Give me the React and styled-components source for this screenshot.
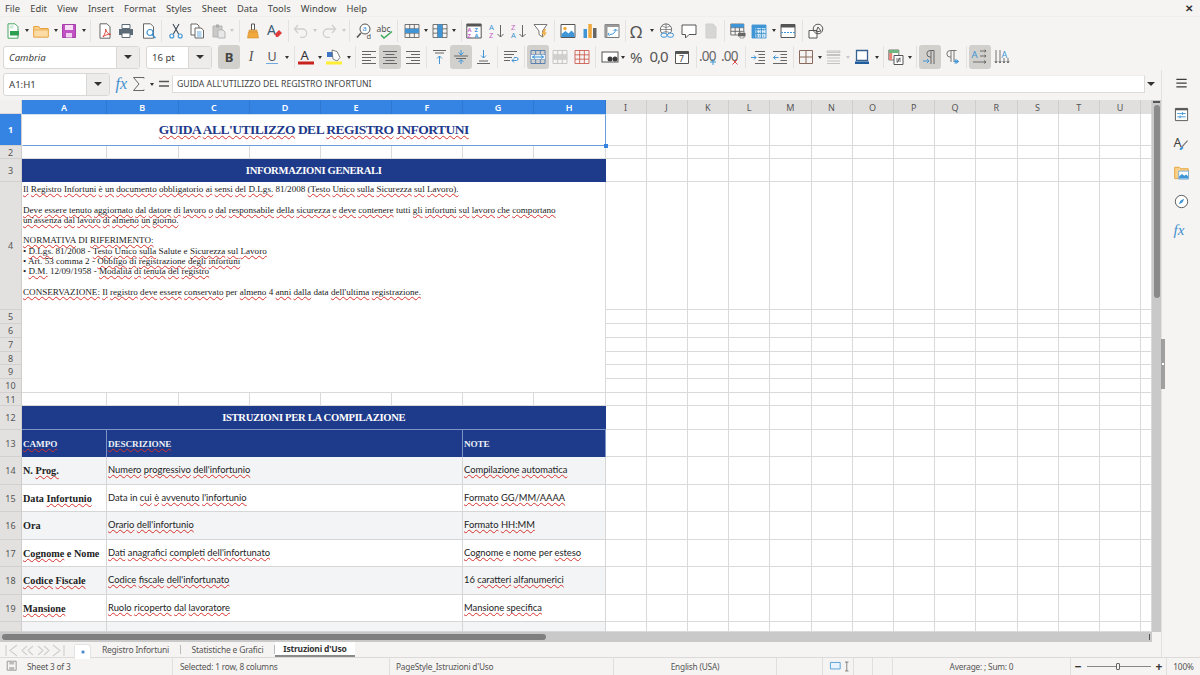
import React from "react";
import styled, { createGlobalStyle } from "styled-components";

const Global = createGlobalStyle`
  html, body { margin: 0; padding: 0; background: #f5f4f2; overflow: hidden; }
  * { box-sizing: border-box; }
`;

const UI = `"Noto Sans", "Open Sans", sans-serif`;
const SERIF = `"Liberation Serif", "DejaVu Serif", serif`;
const BODY = `Lato, "Noto Sans", sans-serif`;
const NAVY = "#1e3a8a";
const BLUE = "#3584e4";
const LINE = "#dadada";

const Page = styled.div`
  width: 1200px; height: 675px; display: flex; flex-direction: column;
  background: #f5f4f2; font-family: ${UI}; color: #3d3d3d; overflow: hidden;
`;
const MenuBar = styled.div`
  height: 17px; flex: none; display: flex; align-items: center; gap: 10.2px;
  padding-left: 5px; font-size: 9.4px; color: #444; border-bottom: 1px solid #efeeec; position: relative;
`;
const CloseDoc = styled.span`
  position: absolute; right: 7px; top: 1px; font-size: 10px; font-weight: 700; color: #333;
`;
const ToolRow = styled.div`
  height: ${p => p.$h}px; flex: none; display: flex; align-items: center;
  padding-left: ${p => p.$pad || 0}px;
`;
const Slot = styled.div`
  flex: none; display: flex; align-items: center; justify-content: center;
  height: ${p => (p.$pressed ? 24 : 16)}px; width: ${p => p.$w}px;
  background: ${p => (p.$pressed ? "#d1d0cd" : "transparent")}; border-radius: 3px;
  color: #4a4a4a; font-size: 12px;
`;
const Caret = styled.span`
  display: block; width: 0; height: 0;
  border-left: ${p => (p.$big ? 4 : 2.5)}px solid transparent;
  border-right: ${p => (p.$big ? 4 : 2.5)}px solid transparent;
  border-top: ${p => (p.$big ? 4 : 3)}px solid ${p => (p.$light ? "#c9c9c9" : "#333")};
`;
const Sep = styled.span`
  display: block; width: 1px; height: 22px; background: #e3e2e0;
`;
const Combo = styled.div`
  flex: none; width: ${p => p.$w}px; height: ${p => p.$h || 23}px; display: flex;
  margin-right: ${p => p.$mr || 0}px; background: #fff;
  border: 1px solid #d9d8d6; border-radius: 3px; overflow: hidden;
`;
const ComboText = styled.span`
  flex: 1; display: flex; align-items: center; padding-left: 5px; font-size: 9.6px; color: #3d3d3d;
  font-style: ${p => (p.$italic ? "italic" : "normal")};
`;
const ComboBtn = styled.span`
  flex: none; width: 23px; display: flex; align-items: center; justify-content: center;
  background: #edecea; border-left: 1px solid #d9d8d6;
`;
const Mid = styled.div`
  flex: 1; display: flex; min-height: 0; position: relative;
`;
const Left = styled.div`
  flex: none; width: 1161px; display: flex; flex-direction: column;
`;
const FormulaRow = styled.div`
  height: 30px; flex: none; display: flex; align-items: center; padding: 0 0 2px 3px;
`;
const Input = styled.div`
  flex: none; width: 973px; height: 18px; background: #fff;
  border: 1px solid #dcdbd9; border-top-color: #eee; font-size: 8.7px; color: #444;
  display: flex; align-items: center; padding-left: 4px;
`;
const InputCaret = styled.span`
  margin-left: 2px; display: block;
`;
const SheetRow = styled.div`
  flex: none; height: 532px; display: flex;
`;
const Grid = styled.div`
  flex: none; width: 1152px; height: 532px; display: grid; background: #fff; overflow: hidden;
  grid-template-columns: 22px 85px 71.5px 71.5px 71px 71px 71px 71px 71.5px 41px 41px 41.5px 41px 41.5px 41px 41px 41.5px 41px 41.5px 41px 41.5px 41px 11px;
  grid-template-rows: 14px 32px 13px 23px 128px 14px 14px 14px 13px 14px 14px 13px 24px 27px 28px 27px 28px 27px 28px 27px 10px;
`;
const Corner = styled.div`
  background: #f1f0ee; border-right: 1px solid #d8d7d5; border-bottom: 1px solid #d8d7d5;
`;
const ColHead = styled.div`
  display: flex; align-items: center; justify-content: center; font-size: 9px;
  font-weight: ${p => (p.$on ? 600 : 400)};
  color: ${p => (p.$on ? "#fff" : "#555")};
  background: ${p => (p.$on ? BLUE : "#e0dfdd")};
  border-right: 1px solid ${p => (p.$on ? "#2f78d2" : "#cfcecc")};
`;
const RowHead = styled.div`
  display: flex; align-items: center; justify-content: center; font-size: 9px;
  font-weight: ${p => (p.$on ? 700 : 400)};
  color: ${p => (p.$on ? "#fff" : "#555")};
  background: ${p => (p.$on ? BLUE : "#e2e1df")};
  border-bottom: 1px solid #d2d1cf; border-right: 1px solid #cfcecc;
`;
const Blank = styled.div`
  border-right: 1px solid ${LINE}; border-bottom: 1px solid ${LINE};
`;
const TitleCell = styled.div`
  grid-column: span 8; position: relative; display: flex; align-items: center; justify-content: center;
  border: 1.5px solid #6a9ed9; border-top-color: #cfe0f3; border-left-color: #fff;
  font-family: ${SERIF}; font-weight: 700; font-size: 13.5px; letter-spacing: -0.5px; color: ${NAVY}; background: #fff;
`;
const Handle = styled.span`
  position: absolute; right: -3px; bottom: -3px; width: 4px; height: 4px; background: #3584e4;
`;
const Band = styled.div`
  grid-column: span 8; display: flex; align-items: center; justify-content: center;
  background: ${NAVY}; color: #fff; font-family: ${SERIF}; font-weight: 700; font-size: 10.6px; letter-spacing: -0.3px;
  border-bottom: 1px solid ${p => (p.$line ? "#7f93c4" : NAVY)};
`;
const Notes = styled.div`
  grid-column: span 8; grid-row: span 7; padding: 2px 0 0 1px; font-family: ${SERIF};
  font-size: 9.1px; line-height: 10.3px; color: #1a1a1a; background: #fff;
  border-right: 1px solid ${LINE}; border-bottom: 1px solid ${LINE}; white-space: pre;
`;
const NoteLine = styled.div`
  height: 10.3px;
`;
const HeadCell = styled.div`
  grid-column: span ${p => p.$span}; display: flex; align-items: center; padding-left: 1px;
  background: ${NAVY}; color: #eef1f8; font-family: ${SERIF}; font-weight: 700; font-size: 9.2px; letter-spacing: -0.1px;
  border-right: 1px solid #7f93c4;
`;
const DataCell = styled.div`
  grid-column: span ${p => p.$span}; display: flex; padding-left: 1px;
  align-items: ${p => (p.$cut ? "flex-start" : "center")};
  padding-top: ${p => (p.$cut ? 6.5 : 0)}px;
  padding-bottom: ${p => (p.$label || p.$cut ? 0 : 2)}px;
  white-space: nowrap; overflow: hidden;
  background: ${p => (p.$alt ? "#f2f4f5" : "#fff")};
  border-right: 1px solid #d6d6d6; border-bottom: 1px solid #d6d6d6; color: #222;
  font-family: ${p => (p.$label ? SERIF : BODY)};
  font-weight: ${p => (p.$label ? 700 : 400)};
  font-size: ${p => (p.$label ? 10.2 : 9.35)}px;
`;
const Typo = styled.span`
  text-decoration: underline wavy #d6332e 0.5px; text-underline-offset: 0.5px; text-decoration-skip-ink: none;
`;
const VScroll = styled.div`
  flex: none; width: 9px; background: #c9c9c9; position: relative; padding: 5px 1.5px 0;
`;
const VThumb = styled.div`
  height: 193px; background: #8a8a8a; border-radius: 3px;
`;
const VTop = styled.div`
  position: absolute; left: 1px; right: 1px; top: 1px; height: 1.5px; background: #555;
`;
const HScroll = styled.div`
  flex: none; height: 10px; width: 1152px; background: #c9c9c9; padding: 1.5px 0 0 2px; position: relative;
`;
const HThumb = styled.div`
  width: 544px; height: 6px; background: #7f7f7f; border-radius: 3px;
`;
const HEnd = styled.span`
  position: absolute; right: 2px; top: 2px; width: 1px; height: 6px; background: #555;
`;
const TabBar = styled.div`
  flex: 1; display: flex; align-items: stretch; font-size: 8.5px; letter-spacing: -0.2px; color: #555; min-height: 0;
`;
const NavBlock = styled.div`
  flex: none; width: 74px; padding: 2px 0 0 5px;
`;
const NewTab = styled.div`
  flex: none; width: 17px; height: 15px; margin-top: 2px; background: #fff; border: 1px solid #e3e3e3;
  border-bottom: none; border-radius: 2px 4px 0 0; display: flex; align-items: center; justify-content: center;
`;
const Tab = styled.div`
  flex: none; width: ${p => p.$w}px; display: flex; align-items: center; justify-content: center;
  ${p => p.$on ? `background:#fff; color:#333; font-weight:700; border-bottom:2px solid #8a8a8a;` : ""}
`;
const TabSep = styled.span`
  flex: none; width: 1px; height: 9px; align-self: center; background: #bbb;
`;
const Side = styled.div`
  flex: none; width: 39px; border-left: 1px solid #e2e1df; display: flex; flex-direction: column;
  align-items: center; padding-top: 6px; gap: 14px;
`;
const SideTop = styled.div`
  margin-bottom: 2px;
`;
const SideGrip = styled.div`
  position: absolute; left: 1161px; top: 269px; width: 4px; height: 50px; background: #9f9f9f;
  display: flex; align-items: center; justify-content: center;
`;
const GripDot = styled.span`
  width: 2px; height: 2px; background: #fff;
`;
const Status = styled.div`
  flex: none; height: 18px; display: flex; align-items: center; font-size: 8.3px; letter-spacing: -0.2px; color: #555;
  border-top: 1px solid #dbdad8;
`;
const Seg = styled.div`
  flex: none; width: ${p => p.$w}px; height: 100%; display: flex; align-items: center;
  justify-content: ${p => p.$j || "center"}; padding-left: ${p => p.$pl || 0}px; gap: ${p => p.$gap || 0}px;
  border-right: ${p => (p.$nb ? "none" : "1px solid #e0dfdd")}; white-space: nowrap;
`;
const Track = styled.div`
  width: 64px; height: 1px; background: #888; position: relative;
`;
const Knob = styled.span`
  position: absolute; left: 29px; top: -3px; width: 4px; height: 7px; background: #f5f4f2; border: 1px solid #666; border-radius: 1px;
`;
const PM = styled.span`
  font-size: 12px; font-weight: 700; color: #333; line-height: 1;
`;

const G = ({ s = 16, children }) => (
  <svg width={s} height={s} viewBox="0 0 16 16" fill="none" style={{ display: "block", flex: "none", overflow: "visible" }}>{children}</svg>
);

const txt = { fontFamily: "Noto Sans, sans-serif" };
const gridLines = (x, y, w, h, c) => (
  <path d={`M${x} ${y}h${w}v${h}h${-w}zM${x} ${y + h / 3}h${w}M${x} ${y + 2 * h / 3}h${w}M${x + w / 3} ${y}v${h}M${x + 2 * w / 3} ${y}v${h}`} stroke={c} strokeWidth=".8" />
);

const icons = {
  new: <><path d="M3 .8h7l3 3v11.4H3z" fill="#fff" stroke="#4aa564" /><path d="M5 8h9v4.5H5z" fill="#2e9e4f" /><path d="M4.5 2.5h4v3h-4z" fill="#cfe9d5" /></>,
  open: <><path d="M.7 3.5h5l1.5 2h8v8.5H.7z" fill="#fbd08a" stroke="#e6a23c" /><path d="M.7 7h14.6v7H.7z" fill="#fcdca6" stroke="#e6a23c" strokeWidth=".7" /></>,
  save: <><path d="M1.5 1.5h13v13h-13z" fill="#c152c4" stroke="#a63fa9" /><path d="M4 2h8v5H4z" fill="#f6dff6" /><path d="M5 10h6v4.5H5z" fill="#efd1f0" /></>,
  pdf: <><path d="M3 .8h7l3 3v11.4H3z" fill="#fff" stroke="#666" /><path d="M6 14c2-3 3-6 2.6-8 .8 3 2.5 5 5 5.4-3-.3-6 .7-7.6 2.6z" stroke="#d8392f" strokeWidth=".9" /></>,
  print: <><path d="M4 1.5h8v4H4z" fill="#fff" stroke="#5b6b78" /><path d="M1 6h14v6H1z" fill="#5b6b78" /><path d="M4 10h8v4.5H4z" fill="#fff" stroke="#5b6b78" /></>,
  preview: <><path d="M2.5.8h7l3 3v11.4h-10z" fill="#fff" stroke="#666" /><circle cx="9" cy="9.5" r="3" fill="#fff" stroke="#3f95d6" strokeWidth="1.2" /><path d="M11 11.5l3.5 3.5" stroke="#3f95d6" strokeWidth="1.5" /></>,
  cut: <><path d="M5 1l5.6 10M11 1L5.4 11" stroke="#3d4b57" strokeWidth="1.1" /><circle cx="3.8" cy="13" r="2" stroke="#3f95d6" strokeWidth="1.1" /><circle cx="12.2" cy="13" r="2" stroke="#3f95d6" strokeWidth="1.1" /></>,
  copy: <><path d="M2 1h6l2 2v9H2z" fill="#fff" stroke="#666" /><path d="M6 5h6l2.5 2v8H6z" fill="#fff" stroke="#666" /><path d="M8 9h4.5M8 11h4.5M8 13h4.5" stroke="#3f95d6" strokeWidth=".8" /></>,
  paste: <><path d="M2 3h9v11H2z" fill="#c9c9c9" stroke="#b5b5b5" /><path d="M5 1.5h3v3H5z" fill="#aaa" /><path d="M7 7h5l2 2v6H7z" fill="#e8e8e8" stroke="#b5b5b5" /></>,
  clone: <><path d="M6.5 1h3v6h-3z" fill="#fff" stroke="#555" /><path d="M4 7h8v2H4z" fill="#f0b65c" stroke="#d48f2a" strokeWidth=".6" /><path d="M3.5 9h9l1 6h-11z" fill="#f1a93d" stroke="#d48f2a" strokeWidth=".6" /></>,
  clear: <><text x="0" y="12" fontSize="14" fill="#3c5d78" style={txt}>A</text><path d="M8 11l4-4 3 3-4 4H9z" fill="#e23b3b" /></>,
  undo: <path d="M5 2L1.5 6 5 10M2 6h7.5a4.2 4.2 0 010 8.4H7" stroke="#cfcfcf" strokeWidth="1.3" />,
  redo: <path d="M11 2l3.5 4L11 10M14 6H6.5a4.2 4.2 0 000 8.4H9" stroke="#cfcfcf" strokeWidth="1.3" />,
  find: <><circle cx="9" cy="6" r="5" stroke="#555" strokeWidth="1" fill="#fff" /><path d="M5 10l-4 4.5" stroke="#555" strokeWidth="1.6" /><text x="6.4" y="8.2" fontSize="7.5" fill="#3f95d6" style={txt}>a</text><text x="10.5" y="15.5" fontSize="7.5" fill="#555" style={txt}>d</text></>,
  spell: <><text x="-.5" y="8.5" fontSize="8.6" fill="#555" style={txt}>abc</text><path d="M4 12l3 3 8-6.5" stroke="#3fa85a" strokeWidth="1.5" /></>,
  tableRow: <>{gridLines(1, 1.5, 14, 13, "#555")}<path d="M1 5.8h14V10H1z" fill="#3f95d6" /></>,
  tableCol: <>{gridLines(1, 1.5, 14, 13, "#555")}<path d="M5.6 1.5H10.4v13H5.6z" fill="#3f95d6" /></>,
  sort: <><path d="M.8 1h14.4v14H.8z" fill="#fff" stroke="#555" /><path d="M1 1h14v2.5H1z" fill="#555" /><text x="1.6" y="9" fontSize="5.8" fontWeight="700" fill="#c666c8" style={txt}>A</text><text x="8.6" y="9" fontSize="5.8" fontWeight="700" fill="#3f95d6" style={txt}>Z</text><text x="1.6" y="14.6" fontSize="5.8" fontWeight="700" fill="#c666c8" style={txt}>Z</text><text x="8.6" y="14.6" fontSize="5.8" fontWeight="700" fill="#3f95d6" style={txt}>A</text></>,
  az: <><text x="0" y="7" fontSize="7.6" fill="#3f95d6" style={txt}>A</text><text x="0" y="15" fontSize="7.6" fill="#c666c8" style={txt}>Z</text><path d="M11.5 2v12M8.5 11l3 3 3-3" stroke="#666" strokeWidth="1" /></>,
  za: <><text x="0" y="7" fontSize="7.6" fill="#c666c8" style={txt}>Z</text><text x="0" y="15" fontSize="7.6" fill="#3f95d6" style={txt}>A</text><path d="M11.5 2v12M8.5 11l3 3 3-3" stroke="#666" strokeWidth="1" /></>,
  filter: <><path d="M1 1.5h13L9.5 8v6L6 11.5V8z" fill="#fff" stroke="#777" /><path d="M11 6L8.5 11h2.2l-1 4L14 9.5h-2.3L13 6z" fill="#f2b04a" /></>,
  image: <><path d="M1 1.5h14v13H1z" fill="#fff" stroke="#555" /><circle cx="5" cy="5.5" r="1.7" fill="#f0a93a" /><path d="M1.5 14V11l4-3 3 2.5 3-3 3 3V14z" fill="#3f95d6" /></>,
  chart: <><path d="M1.5 6h3.5v9H1.5z" fill="#3f95d6" /><path d="M6.3 1h3.5v14H6.3z" fill="#f0a93a" /><path d="M11 5h3.5v10H11z" fill="#666" /></>,
  pivot: <><path d="M1 1.5h14v13H1z" fill="#fff" stroke="#777" /><path d="M1 1.5h14V4H1zM1 1.5h2.5v13H1z" fill="#999" /><path d="M6 11.5c3 0 5.5-2 5.5-5M9.5 8l2-2 2 2M5 9.8l-1 1.7 2 1" stroke="#3f95d6" /></>,
  omega: <text x="0" y="14.5" fontSize="17" fill="#555" style={txt}>Ω</text>,
  link: <><circle cx="7" cy="6.5" r="5.6" fill="#fff" stroke="#666" /><path d="M1.5 6.5h11M7 1v11M3 2.8c2.5 2 5.5 2 8 0M3 10.2c2.5-2 5.5-2 8 0" stroke="#666" strokeWidth=".7" /><rect x="2" y="10.2" width="6" height="4" rx="2" stroke="#3f95d6" fill="#f5f4f2" /><rect x="8.5" y="10.2" width="6" height="4" rx="2" stroke="#3f95d6" fill="#f5f4f2" /></>,
  comment: <path d="M1 2h14v9.5H8L4.5 15v-3.5H1z" fill="#fff" stroke="#555" />,
  pageGray: <path d="M3 1h7l3 3v11H3z" fill="#d6d6d4" stroke="#cfcfcd" />,
  defPrint: <>{gridLines(.8, 1, 13, 11, "#555")}<path d="M1 1h13v3.5H1z" fill="#3f95d6" /><path d="M8 10h7.5v3.4H8z" fill="#666" /><path d="M10 8.5h4V10h-4zM10 13h4v2h-4z" fill="#fff" stroke="#666" strokeWidth=".6" /></>,
  freeze: <><path d="M1 2h14v13H1z" fill="#dcebf7" />{gridLines(1, 2, 14, 13, "#2d8ccc")}<path d="M1 2h14v3H1zM1 2h3.5v13H1z" fill="#3f95d6" /><path d="M6 7h8M6 10h8M6 13h8" stroke="#2d8ccc" strokeDasharray="1 1" /></>,
  window: <><path d="M1 1.5h14v13H1z" fill="#fff" stroke="#555" /><path d="M1 1.5h14V4.5H1z" fill="#555" /><path d="M1 9.5h14" stroke="#3f95d6" strokeDasharray="2 1" /></>,
  shapes: <><path d="M1 7.5h8v7.5H1z" stroke="#555" fill="#fff" /><circle cx="10" cy="6" r="4.8" stroke="#555" fill="none" /><path d="M8 9l2-5 3 4z" stroke="#555" /></>,
  left: <path d="M1 2.5h14M1 5.5h9M1 8.5h14M1 11.5h9M1 14.5h14" stroke="#666" />,
  center: <path d="M1 2.5h14M3.5 5.5h9M1 8.5h14M3.5 11.5h9M1 14.5h14" stroke="#666" />,
  right: <path d="M1 2.5h14M6 5.5h9M1 8.5h14M6 11.5h9M1 14.5h14" stroke="#666" />,
  vtop: <><path d="M1 1.5h13M3 4h9" stroke="#666" /><path d="M7.5 15V7M5 9.5l2.5-2.5L10 9.5" stroke="#3f95d6" /></>,
  vmid: <><path d="M1 7h14M3 9.5h10" stroke="#666" /><path d="M8 1v5M5.5 3.5L8 6l2.5-2.5M8 15v-4M5.5 13L8 10.5l2.5 2.5" stroke="#3f95d6" /></>,
  vbot: <><path d="M1 14.5h13M3 12h9" stroke="#666" /><path d="M7.5 1v8M5 6.5L7.5 9 10 6.5" stroke="#3f95d6" /></>,
  wrap: <><path d="M1 2.5h13M1 5.5h10M1 8.5h8M1 11.5h6" stroke="#666" /><path d="M9 11.5h4.5a1.2 1.2 0 000-3H11M11 13.5l-2-2 2-2" stroke="#3f95d6" /></>,
  merge: <><path d="M1 5.8h14v4.4H1z" fill="#d8ebf8" />{gridLines(1, 1.5, 14, 13, "#3f6fa8")}<path d="M1 5.8h14v4.4H1z" fill="#eaf4fb" /><path d="M2.5 8h11M5 6.5L2.5 8 5 9.5M11 6.5L13.5 8 11 9.5" stroke="#3f95d6" /></>,
  grayTable: <>{gridLines(1, 1.5, 14, 13, "#bdbdbb")}<path d="M1 6h14v4H1z" fill="#cfcfcd" /></>,
  redTable: <>{gridLines(1, 1.5, 14, 13, "#c94b3f")}</>,
  currency: <><rect x="1" y="3" width="16" height="10" stroke="#555" fill="#fff" /><circle cx="9" cy="10" r="2.5" fill="#3d3d3d" /><circle cx="14" cy="10" r="2.5" fill="#3d3d3d" /></>,
  percent: <text x="0" y="13.5" fontSize="15" fill="#555" style={txt}>%</text>,
  num: <text x="-1.5" y="13" fontSize="15" fill="#555" style={{ ...txt, letterSpacing: "-1px" }}>0,0</text>,
  date: <><path d="M1.5 2.5h13v12h-13z" fill="#fff" stroke="#555" /><path d="M1.5 2.5h13V5h-13z" fill="#555" /><text x="5" y="13.4" fontSize="8.6" fill="#444" style={txt}>7</text></>,
  decAdd: <><text x="-1" y="12" fontSize="13.5" fill="#666" style={{ ...txt, letterSpacing: "-.8px" }}>.00</text><path d="M13 10v6M10 13h6" stroke="#3f95d6" /></>,
  decDel: <><text x="-1" y="12" fontSize="13.5" fill="#666" style={{ ...txt, letterSpacing: "-.8px" }}>.00</text><path d="M10.5 10.5l5 5M15.5 10.5l-5 5" stroke="#d9534f" /></>,
  indIn: <><path d="M5 2.5h10M8.5 5.5H15M8.5 8.5H15M8.5 11.5H15M5 14.5h10" stroke="#666" /><path d="M1 8.5h5M4 6.5l2 2-2 2" stroke="#3f95d6" /></>,
  indOut: <><path d="M1 2.5h14M8.5 5.5H15M8.5 8.5H15M8.5 11.5H15M1 14.5h14" stroke="#666" /><path d="M6.5 8.5h-5M3.5 6.5l-2 2 2 2" stroke="#3f95d6" /></>,
  borders: <path d="M1.5 1.5h13v13h-13zM8 1.5v13M1.5 8h13" stroke="#8a6a5c" />,
  lines: <path d="M1 2h13v1.4H1zM1 5.5h13v1H1zM1 9h13M1 12h13M1 14.5h13" stroke="#bdbdbb" strokeWidth=".9" />,
  borderColor: <><path d="M2.5 1.5h11v10h-11z" fill="#fff" stroke="#35608f" strokeWidth="1.3" /><path d="M1 12.5h14V15H1z" fill="#1f5c9c" /></>,
  cond: <><path d="M.8 1h10v10H.8z" fill="#fff" stroke="#777" /><path d="M1 1h10v3H1z" fill="#70b77f" /><path d="M1 4h3.2v7H1z" fill="#e8867b" /><path d="M6 6.5h9v9H6z" fill="#fff" stroke="#555" /><path d="M8 10h5M8 12h5M12 8.5l-3 5.5" stroke="#333" strokeWidth=".7" /></>,
  paraL: <><path d="M9 15V1.5M12 15V1.5M12 1.5H8.2a3.3 3.3 0 000 6.6H9" stroke="#666" /><path d="M1 12h6M5 10l2 2-2 2" stroke="#3f95d6" /></>,
  paraR: <><path d="M6 13V1.5M9 13V1.5M11.5 1.5H5.2a3.3 3.3 0 000 6.6H6" stroke="#777" /><path d="M11 10v5M9 12.5h5M9.5 11l3.5 3M13 11l-3.5 3" stroke="#3f95d6" /></>,
  textH: <><text x="-.5" y="9" fontSize="9.5" fill="#3f95d6" style={txt}>A</text><path d="M8 2h6M12.5 .8L14 2l-1.5 1.2M8 7h6M12.5 5.8L14 7l-1.5 1.2M1 13h13M12 11.5l2 1.5-2 1.5" stroke="#555" strokeWidth=".8" /></>,
  textV: <><path d="M2 1v13M.8 12L2 14l1.2-2M6 1v13M4.8 12L6 14l1.2-2M10 9v5M8.8 12L10 14l1.2-2M14 9v5M12.8 12l1.2 2 1.2-2" stroke="#555" strokeWidth=".8" /><text x="7.5" y="8.5" fontSize="9" fill="#3f95d6" style={txt}>A</text></>,
  fx: <text x="-.5" y="13" fontSize="16" fontStyle="italic" fill="#3f8fd0" style={{ fontFamily: "Liberation Serif, serif" }}>fx</text>,
  sum: <path d="M13 2.5V1.5H2.5L8 8l-5.5 6.5H13v-1" stroke="#666" strokeWidth="1" />,
  eq: <path d="M3 5.5h10M3 10h10" stroke="#555" strokeWidth="1.4" />,
  fontColor: <><text x="2.5" y="11" fontSize="13" fill="#333" style={txt}>A</text><path d="M0 12.5h16V15.5H0z" fill="#c9211e" /></>,
  highlight: <><path d="M1 3h6v5H1z" fill="#3f75c4" /><path d="M6 1l5 1.5 3 6-3 3.5-4-2z" fill="#fff" stroke="#666" strokeWidth=".8" /><path d="M0 12.5h16V15.5H0z" fill="#ffee33" /></>,
  hamb: <path d="M2.5 3.5h11M2.5 7.5h11M2.5 11.5h11" stroke="#3d3d3d" strokeWidth="1.4" />,
  props: <><path d="M1.5 1.5h13v13h-13z" fill="#fff" stroke="#555" /><path d="M1.5 1.5h13v2h-13z" fill="#555" /><path d="M3.5 7h9M3.5 10.5h9M9 5.5v3M6.5 9v3" stroke="#3f95d6" /></>,
  styles: <><text x="-.5" y="11.5" fontSize="13.5" fill="#444" style={txt}>A</text><path d="M8 12L14.5 5" stroke="#777" strokeWidth="1.2" /><path d="M6 15c0-3 2-4 4-3 0 2-2 3-4 3z" fill="#3f95d6" /></>,
  gallery: <><path d="M.7 2.5h5l1.5 1.5h8v10.5H.7z" fill="#fbd08a" stroke="#e6a23c" /><path d="M5 6.5h10.5v8.5H5z" fill="#fff" stroke="#3f95d6" strokeWidth=".7" /><path d="M5.5 14.5V12l3-2.5 2.5 2 2-1.5 2 2v2.5z" fill="#3f95d6" /></>,
  nav: <><circle cx="8" cy="8" r="6.6" stroke="#555" fill="#fff" /><path d="M11 5L9 9 5 11l2-4z" fill="#3f95d6" /></>,
  save2: <><path d="M1.5 1.5h11v11h-11z" stroke="#888" fill="none" /><path d="M4 2h6v3.5H4zM4 8.5h6v4H4z" fill="#bbb" /></>,
  rect: <path d="M.5 3h12v8H.5z" stroke="#3f95d6" fill="#eaf3fb" />,
  ibeam: <path d="M3 1.5h5M3 14.5h5M5.5 1.5v13" stroke="#444" strokeWidth=".9" />,
  dot: <circle cx="8" cy="8" r="2.5" fill="#3f7fc4" stroke="#a9c8e8" />,
};

const I = ({ n, s }) => <G s={s}>{icons[n]}</G>;

// Lays a strip of tool icons out in flow; the gap before each item is worked out from its centre.
function Strip({ items, start = 0 }) {
  let edge = start;
  return items.map(([n, c, pressed], i) => {
    const kind = n === "a" || n === "al" ? "caret" : n === "s" ? "sep" : "icon";
    const w = kind === "caret" ? 5 : kind === "sep" ? 1 : pressed ? 22 : 16;
    const ml = c - w / 2 - edge;
    edge = c + w / 2;
    if (kind === "caret") return <Caret key={i} $light={n === "al"} style={{ marginLeft: ml }} />;
    if (kind === "sep") return <Sep key={i} style={{ marginLeft: ml }} />;
    return (
      <Slot key={i} $w={w} $pressed={pressed} style={{ marginLeft: ml }}>
        {typeof n === "string" && icons[n] ? <I n={n} /> : n}
      </Slot>
    );
  });
}

const row1 = [["new",12.5],["a",27],["open",42],["a",57],["save",71],["a",86],["s",93],["pdf",107.5],["print",129],["preview",151.5],["s",164],["cut",178.5],["copy",200],["paste",221.5],["al",235],["s",243],["clone",256.5],["clear",278.5],["s",292],["undo",304.5],["al",319],["redo",334],["al",349],["s",355],["find",370],["spell",391],["s",403],["tableRow",418],["a",432],["tableCol",446.5],["a",461],["s",469],["sort",482],["az",504.5],["za",527],["filter",549],["s",562],["image",575.5],["chart",597.5],["pivot",619.5],["s",633],["omega",645.5],["a",660],["link",675.5],["comment",698],["pageGray",719.5],["s",733],["defPrint",747],["freeze",768],["a",783],["window",798],["s",812],["shapes",825.5]];

const Bold = styled.b`font-size: 13px; color: #444; font-family: ${UI};`;
const Ital = styled.i`font-family: ${SERIF}; font-size: 14px; color: #555;`;
const Under = styled.span`font-size: 12.5px; color: #555; border-bottom: 1.5px solid #6fa8dc; line-height: 13px; padding: 0 1px;`;

const row2 = [[<Bold>B</Bold>,229,true],[<Ital>I</Ital>,251],[<Under>U</Under>,272],["a",287],["s",295],["fontColor",306.5],["a",321],["highlight",336],["a",351],["s",358],["left",371.5],["center",393,true],["right",416],["s",429],["vtop",443],["vmid",464,true],["vbot",486.5],["s",500],["wrap",514],["s",527],["merge",541,true],["grayTable",563],["redTable",585],["s",598],["currency",612],["a",626],["percent",642],["num",663],["date",685.5],["s",700],["decAdd",712],["decDel",734],["s",749],["indIn",762],["indOut",784],["s",797],["borders",809.5],["a",824],["lines",839],["al",853],["borderColor",868],["a",883],["s",890],["cond",903],["a",917],["s",924],["paraL",938,true],["paraR",960.5],["s",974],["textH",988,true],["textV",1009.5]];

const W = ({ t }) =>
  t.split(" ").map((w, i, all) => {
    const sp = i < all.length - 1 ? " " : "";
    return w.startsWith("!")
      ? <React.Fragment key={i}>{w.slice(1)}{sp}</React.Fragment>
      : <React.Fragment key={i}><Typo>{w}</Typo>{sp}</React.Fragment>;
  });

const cols = ["A","B","C","D","E","F","G","H","I","J","K","L","M","N","O","P","Q","R","S","T","U",""];
const freeCols = 14;
const Free = ({ id }) => Array.from({ length: freeCols }, (_, i) => <Blank key={id + "-" + i} />);
const Eight = ({ id }) => Array.from({ length: 8 }, (_, i) => <Blank key={id + "-" + i} />);

const notes = [
  "Il Registro Infortuni è un documento obbligatorio ai sensi del D.Lgs. !81/2008 (Testo Unico sulla Sicurezza sul Lavoro).",
  "",
  "Deve essere tenuto aggiornato dal datore di lavoro o dal responsabile della sicurezza e deve contenere !tutti gli infortuni sul lavoro che comportano",
  "un'assenza dal lavoro di almeno un giorno.",
  "",
  "NORMATIVA !DI RIFERIMENTO:",
  "!• D.Lgs. !81/2008 !- Testo Unico sulla !Salute !e Sicurezza sul Lavoro",
  "!• !Art. !53 !comma !2 !- Obbligo di registrazione degli infortuni",
  "!• D.M. !12/09/1958 !- Modalità di tenuta del registro",
  "",
  "CONSERVAZIONE: Il registro deve essere conservato !per almeno !4 anni dalla !data dell'ultima registrazione.",
];

const data = [
  ["!N. Prog.", "Numero progressivo dell'infortunio", "Compilazione automatica"],
  ["!Data Infortunio", "!Data !in cui è avvenuto l'infortunio", "Formato GG/MM/AAAA"],
  ["!Ora", "Orario dell'infortunio", "Formato HH:MM"],
  ["Cognome !e !Nome", "Dati anagrafici completi dell'infortunato", "Cognome !e nome !per esteso"],
  ["Codice Fiscale", "Codice fiscale dell'infortunato", "!16 caratteri alfanumerici"],
  ["Mansione", "Ruolo ricoperto dal lavoratore", "Mansione specifica"],
];

export default function App() {
  return (
    <Page>
      <Global />
      <MenuBar>
        {["File","Edit","View","Insert","Format","Styles","Sheet","Data","Tools","Window","Help"].map(m => <span key={m}>{m}</span>)}
        <CloseDoc>✕</CloseDoc>
      </MenuBar>
      <ToolRow $h={27}><Strip items={row1} /></ToolRow>
      <ToolRow $h={26} $pad={3}>
        <Combo $w={137} $mr={6}><ComboText $italic>Cambria</ComboText><ComboBtn><Caret $big /></ComboBtn></Combo>
        <Combo $w={66}><ComboText>16 pt</ComboText><ComboBtn><Caret $big /></ComboBtn></Combo>
        <Strip items={row2} start={212} />
      </ToolRow>
      <Mid>
        <Left>
          <FormulaRow>
            <Combo $w={107}><ComboText>A1:H1</ComboText><ComboBtn><Caret $big /></ComboBtn></Combo>
            <Strip items={[["fx",124],["sum",139],["a",152],["eq",165]]} start={110} />
            <Input>GUIDA ALL'UTILIZZO DEL REGISTRO INFORTUNI</Input>
            <InputCaret><Caret $big /></InputCaret>
          </FormulaRow>
          <SheetRow>
            <Grid>
              <Corner />
              {cols.map((c, i) => <ColHead key={i} $on={i < 8}>{c}</ColHead>)}

              <RowHead $on>1</RowHead>
              <TitleCell><span><W t="GUIDA ALL'UTILIZZO !DEL REGISTRO INFORTUNI" /></span><Handle /></TitleCell>
              <Free id="r1" />

              <RowHead>2</RowHead><Eight id="r2a" /><Free id="r2" />

              <RowHead>3</RowHead>
              <Band><span>INFORMAZIONI GENERALI</span></Band>
              <Free id="r3" />

              <RowHead>4</RowHead>
              <Notes>{notes.map((l, i) => <NoteLine key={i}>{l && <W t={l} />}</NoteLine>)}</Notes>
              <Free id="r4" />
              {[5,6,7,8,9,10].map(n => (
                <React.Fragment key={n}><RowHead>{n}</RowHead><Free id={"r" + n} /></React.Fragment>
              ))}

              <RowHead>11</RowHead><Eight id="r11a" /><Free id="r11" />

              <RowHead>12</RowHead>
              <Band $line><span>ISTRUZIONI PER LA COMPILAZIONE</span></Band>
              <Free id="r12" />

              <RowHead>13</RowHead>
              <HeadCell $span={1}><span><W t="CAMPO" /></span></HeadCell>
              <HeadCell $span={5}><span><W t="DESCRIZIONE" /></span></HeadCell>
              <HeadCell $span={2}>NOTE</HeadCell>
              <Free id="r13" />

              {data.map((d, i) => (
                <React.Fragment key={i}>
                  <RowHead>{i + 14}</RowHead>
                  <DataCell $span={1} $label $alt={i % 2 === 0}><span><W t={d[0]} /></span></DataCell>
                  <DataCell $span={5} $alt={i % 2 === 0}><span><W t={d[1]} /></span></DataCell>
                  <DataCell $span={2} $alt={i % 2 === 0}><span><W t={d[2]} /></span></DataCell>
                  <Free id={"d" + i} />
                </React.Fragment>
              ))}

              <RowHead />
              <DataCell $span={1} $alt $cut />
              <DataCell $span={5} $alt $cut>Attività svolta al momento dell'infortunio</DataCell>
              <DataCell $span={2} $alt $cut>Descrizione dell'attività</DataCell>
              <Free id="r20" />
            </Grid>
            <VScroll><VTop /><VThumb /></VScroll>
          </SheetRow>
          <HScroll><HThumb /><HEnd /></HScroll>
          <TabBar>
            <NavBlock>
              <svg width="60" height="13" viewBox="0 0 60 13" fill="none" stroke="#d0d0d0" strokeWidth="1.2">
                <path d="M1 1v11M12 1L5 6.5l7 5.5M28 2l-5 4.5 5 4.5M22 2l-5 4.5 5 4.5M33 2l5 4.5-5 4.5M39 2l5 4.5-5 4.5M48 1l7 5.5-7 5.5M59 1v11" />
              </svg>
            </NavBlock>
            <NewTab><I n="dot" s={10} /></NewTab>
            <Tab $w={89}>Registro Infortuni</Tab>
            <TabSep />
            <Tab $w={93}>Statistiche e Grafici</Tab>
            <TabSep />
            <Tab $w={80} $on>Istruzioni d'Uso</Tab>
          </TabBar>
        </Left>
        <Side>
          <SideTop><I n="hamb" s={15} /></SideTop>
          <I n="props" s={15} />
          <I n="styles" s={15} />
          <I n="gallery" s={15} />
          <I n="nav" s={15} />
          <I n="fx" s={15} />
        </Side>
        <SideGrip><GripDot /></SideGrip>
      </Mid>
      <Status>
        <Seg $w={173} $j="flex-start" $pl={6} $gap={8}><I n="save2" s={13} />Sheet 3 of 3</Seg>
        <Seg $w={217} $j="flex-start" $pl={7}>Selected: 1 row, 8 columns</Seg>
        <Seg $w={224} $j="flex-start" $pl={6}>PageStyle_Istruzioni d'Uso</Seg>
        <Seg $w={163}>English (USA)</Seg>
        <Seg $w={46} />
        <Seg $w={31} $j="flex-start" $pl={7}><I n="rect" s={13} /><I n="ibeam" s={11} /></Seg>
        <Seg $w={19} />
        <Seg $w={20} />
        <Seg $w={178}>Average: ; Sum: 0</Seg>
        <Seg $w={96} $gap={5}><PM>−</PM><Track><Knob /></Track><PM>+</PM></Seg>
        <Seg $w={33} $nb>100%</Seg>
      </Status>
    </Page>
  );
}
